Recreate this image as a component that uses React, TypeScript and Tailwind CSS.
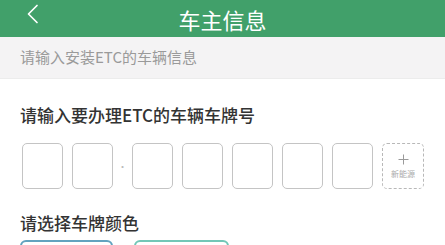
const font = { fontFamily: '"Noto Sans CJK SC", "Noto Sans", sans-serif' };

function Box() {
  return <div className="h-[46px] w-[41px] rounded-[5px] border-[1.5px] border-[#c4c4c4] bg-white" />;
}

export default function App() {
  return (
    <div className="h-[245px] w-[445px] overflow-hidden bg-white" style={font}>
      <header className="relative flex h-[37px] items-center justify-center bg-[#41a06a]">
        <svg className="absolute left-[26px] top-[4px] h-[20px] w-[13px]" viewBox="0 0 13 20" fill="none">
          <polyline points="11,1.5 2.5,10 11,18.5" stroke="white" strokeWidth="1.7" strokeLinecap="round" strokeLinejoin="round" />
        </svg>
        <h1 className="text-[22px] leading-none text-white">车主信息</h1>
      </header>

      <div className="flex h-[42px] items-center border-b border-[#ececec] bg-[#f4f3f4] px-[20px] text-[15px] text-[#9a9a9a]">
        请输入安装ETC的车辆信息
      </div>

      <div className="px-[20px]">
        <div className="mt-[27px] text-[17px] font-medium leading-none text-[#333]">请输入要办理ETC的车辆车牌号</div>

        <div className="mt-[20px] flex items-center pl-[2px]">
          <div className="flex gap-[9px]">
            <Box />
            <Box />
          </div>
          <div className="flex w-[19px] justify-center text-[10px] text-[#bbb]">·</div>
          <div className="flex gap-[9px]">
            <Box />
            <Box />
            <Box />
            <Box />
            <Box />
            <div className="flex h-[46px] w-[42px] flex-col items-center justify-center rounded-[5px] border-[1.5px] border-dashed border-[#b8b8b8]">
              <svg className="h-[11px] w-[11px]" viewBox="0 0 11 11">
                <path d="M5.5 0.5v10M0.5 5.5h10" stroke="#9a9a9a" strokeWidth="1" />
              </svg>
              <span className="mt-[5px] text-[8px] leading-none text-[#aaa]">新能源</span>
            </div>
          </div>
        </div>

        <div className="mt-[25px] text-[17px] font-medium leading-none text-[#333]">请选择车牌颜色</div>

        <div className="mt-[9px] flex gap-[21px]">
          <div className="h-[30px] w-[93px] rounded-[6px] border-2 border-[#62a3bf]" />
          <div className="h-[30px] w-[95px] rounded-[6px] border-2 border-[#72c7b7]" />
        </div>
      </div>
    </div>
  );
}
